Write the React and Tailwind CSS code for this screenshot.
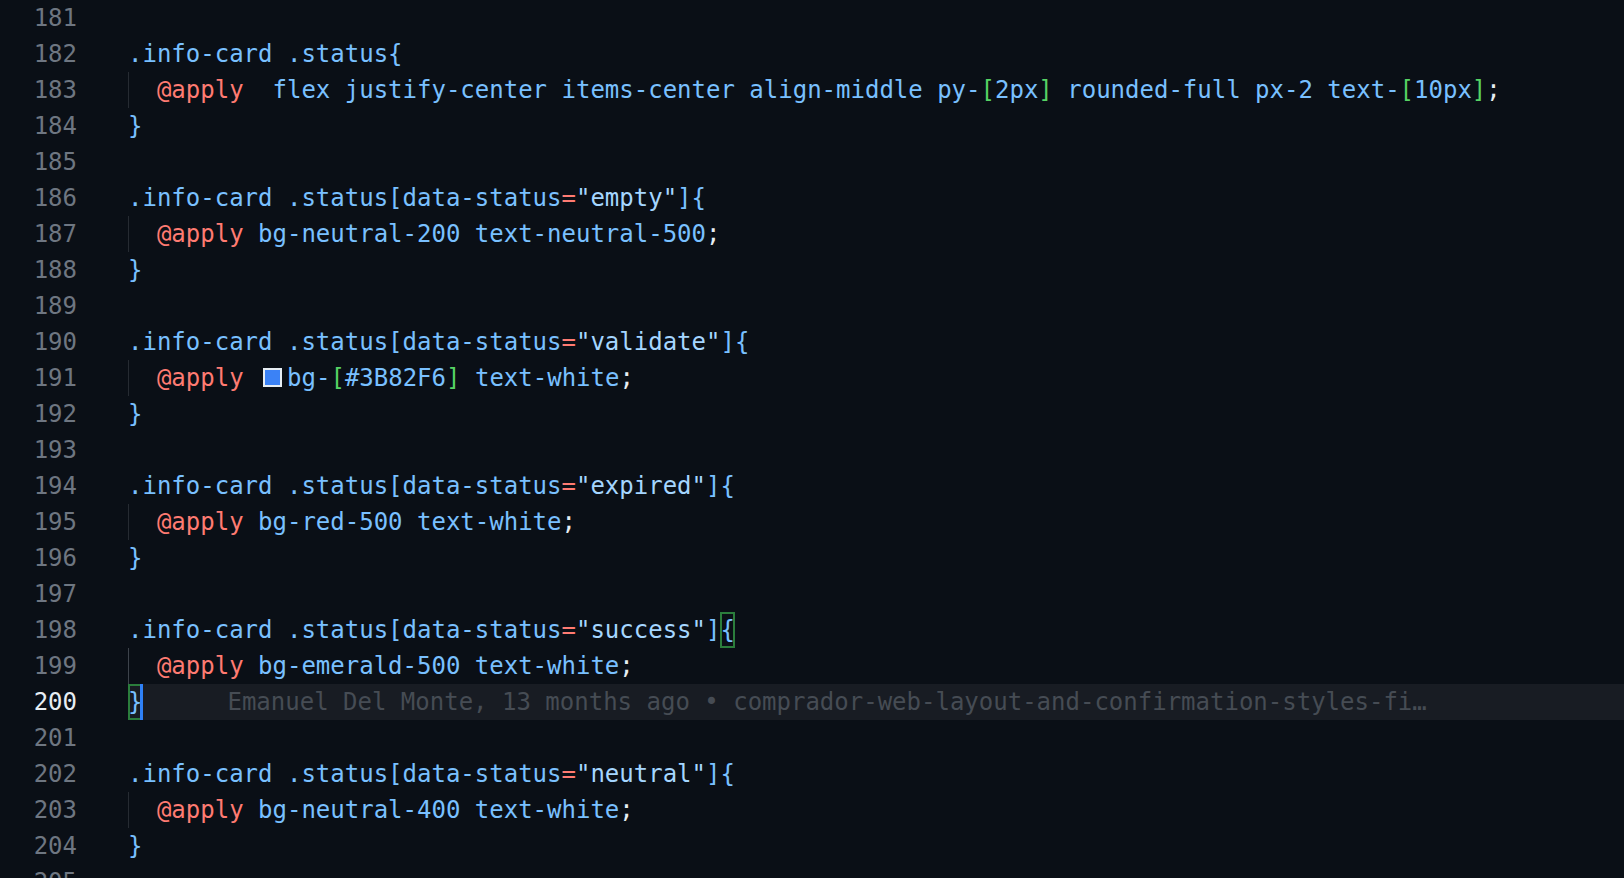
import React from 'react';

const C = {
  sel: 'text-[#79c0ff]',
  kw: 'text-[#ff7b72]',
  br: 'text-[#56d364]',
  str: 'text-[#a5d6ff]',
  pun: 'text-[#e6edf3]',
};

// each line: [number, segments, options]
const lines = [
  [181, []],
  [182, [['.info-card .status{', 'sel']]],
  [183, [['  '], ['@apply', 'kw'], ['  flex justify-center items-center align-middle py-', 'sel'], ['[', 'br'], ['2px', 'sel'], [']', 'br'], [' rounded-full px-2 text-', 'sel'], ['[', 'br'], ['10px', 'sel'], [']', 'br'], [';', 'pun']], { guide: true }],
  [184, [['}', 'sel']]],
  [185, []],
  [186, [['.info-card .status[data-status', 'sel'], ['=', 'kw'], ['"empty"', 'str'], [']{', 'sel']]],
  [187, [['  '], ['@apply', 'kw'], [' bg-neutral-200 text-neutral-500', 'sel'], [';', 'pun']], { guide: true }],
  [188, [['}', 'sel']]],
  [189, []],
  [190, [['.info-card .status[data-status', 'sel'], ['=', 'kw'], ['"validate"', 'str'], [']{', 'sel']]],
  [191, [['  '], ['@apply', 'kw'], [' '], ['swatch'], ['bg-', 'sel'], ['[', 'br'], ['#3B82F6', 'sel'], [']', 'br'], [' text-white', 'sel'], [';', 'pun']], { guide: true }],
  [192, [['}', 'sel']]],
  [193, []],
  [194, [['.info-card .status[data-status', 'sel'], ['=', 'kw'], ['"expired"', 'str'], [']{', 'sel']]],
  [195, [['  '], ['@apply', 'kw'], [' bg-red-500 text-white', 'sel'], [';', 'pun']], { guide: true }],
  [196, [['}', 'sel']]],
  [197, []],
  [198, [['.info-card .status[data-status', 'sel'], ['=', 'kw'], ['"success"', 'str'], [']', 'sel'], ['{', 'box']]],
  [199, [['  '], ['@apply', 'kw'], [' bg-emerald-500 text-white', 'sel'], [';', 'pun']], { guide: true, active: true }],
  [200, [['}', 'box'], ['cursor'], ['blame']], { current: true }],
  [201, []],
  [202, [['.info-card .status[data-status', 'sel'], ['=', 'kw'], ['"neutral"', 'str'], [']{', 'sel']]],
  [203, [['  '], ['@apply', 'kw'], [' bg-neutral-400 text-white', 'sel'], [';', 'pun']], { guide: true }],
  [204, [['}', 'sel']]],
  [205, []],
];

function Segment({ seg }) {
  const [text, kind] = seg;
  if (text === 'swatch') {
    return (
      <span className="inline-block align-middle ml-[5px] mr-[5px] w-[19px] h-[19px] border-2 border-[#e6edf3] bg-[#3b82f6] -mt-[4px]"></span>
    );
  }
  if (text === 'cursor') {
    return <span className="inline-block align-top -ml-[2px] w-[3px] h-[36px] bg-[#2f81f7]"></span>;
  }
  if (text === 'blame') {
    return (
      <span className="ml-[84px] text-[#464c54]">
        Emanuel Del Monte, 13 months ago • comprador-web-layout-and-confirmation-styles-fi…
      </span>
    );
  }
  if (kind === 'box') {
    return (
      <span className="inline-block align-top h-[36px] text-[#79c0ff] shadow-[inset_0_0_0_2px_#2b7d3c]">{text}</span>
    );
  }
  return <span className={kind ? C[kind] : ''}>{text}</span>;
}

export default function App() {
  return (
    <div
      className="w-[1624px] h-[878px] overflow-hidden bg-[#0a0f16] text-[24px] leading-[36px]"
      style={{ fontFamily: '"DejaVu Sans Mono", "Liberation Mono", monospace' }}
    >
      {lines.map(([num, segs, opts = {}]) => (
        <div key={num} className="flex h-[36px] whitespace-pre">
          <div className="w-[128px] shrink-0 flex">
            <span className={`w-[77px] text-right ${opts.current ? 'text-[#e6edf3]' : 'text-[#6e7681]'}`}>{num}</span>
          </div>
          <div
            className={`flex-1 ${opts.current ? 'bg-[#181c23]' : ''} ${
              opts.guide ? (opts.active ? 'shadow-[inset_1px_0_0_#3d434b]' : 'shadow-[inset_1px_0_0_#262b32]') : ''
            }`}
          >
            {segs.map((s, i) => (
              <Segment key={i} seg={s} />
            ))}
          </div>
        </div>
      ))}
    </div>
  );
}
